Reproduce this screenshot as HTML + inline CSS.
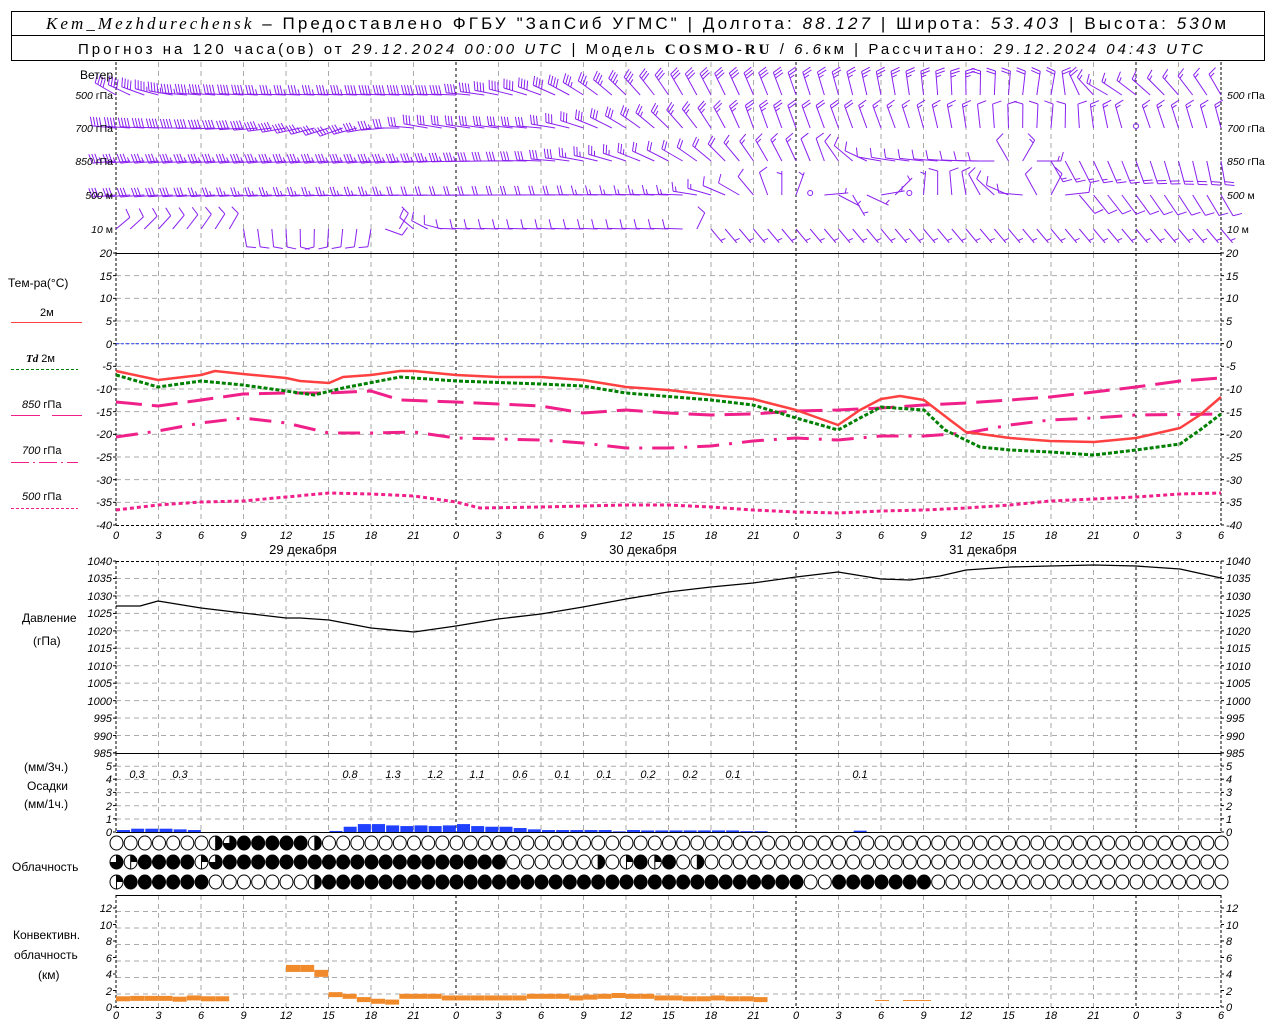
<!DOCTYPE html>
<html><head><meta charset="utf-8">
<style>
html,body{margin:0;padding:0;background:#fff;width:1280px;height:1024px;overflow:hidden}
svg{display:block}
text{font-family:"Liberation Sans",sans-serif;fill:#000}
.t{font-size:11px;font-style:italic}
.l{font-size:12px}
</style></head><body>
<svg id="s" width="1280" height="1024" viewBox="0 0 1280 1024" xmlns="http://www.w3.org/2000/svg">
<rect x="11.5" y="11.5" width="1253" height="49" fill="#fff" stroke="#000"/>
<line x1="11" y1="35.5" x2="1265" y2="35.5" stroke="#000"/>
<text x="46" y="29" font-size="17" textLength="1180" lengthAdjust="spacing"><tspan font-family="Liberation Serif" font-style="italic">Kem_Mezhdurechensk</tspan> – Предоставлено ФГБУ "ЗапСиб УГМС" | Долгота: <tspan font-style="italic">88.127</tspan> | Широта: <tspan font-style="italic">53.403</tspan> | Высота: <tspan font-style="italic">530</tspan>м</text>
<text x="78" y="54" font-size="15" textLength="1125" lengthAdjust="spacing">Прогноз на 120 часа(ов) от <tspan font-style="italic">29.12.2024 00:00 UTC</tspan>  | Модель <tspan font-family="Liberation Serif" font-weight="bold">COSMO-RU</tspan> / <tspan font-style="italic">6.6</tspan>км | Рассчитано: <tspan font-style="italic">29.12.2024 04:43 UTC</tspan></text>
<g id="g"></g>
<g class="l" text-anchor="end" font-size="11">
<text x="113" y="79">Ветер</text>
<text x="113" y="99" font-size="10.5"><tspan font-style="italic">500</tspan> гПа</text>
<text x="113" y="132" font-size="10.5"><tspan font-style="italic">700</tspan> гПа</text>
<text x="113" y="165" font-size="10.5"><tspan font-style="italic">850</tspan> гПа</text>
<text x="113" y="199" font-size="10.5"><tspan font-style="italic">500</tspan> м</text>
<text x="113" y="233" font-size="10.5"><tspan font-style="italic">10</tspan>   м</text>
</g>
<g font-size="10.5">
<text x="1227" y="99"><tspan font-style="italic">500</tspan> гПа</text>
<text x="1227" y="132"><tspan font-style="italic">700</tspan> гПа</text>
<text x="1227" y="165"><tspan font-style="italic">850</tspan> гПа</text>
<text x="1227" y="199"><tspan font-style="italic">500</tspan> м</text>
<text x="1227" y="233"><tspan font-style="italic">10</tspan>   м</text>
</g>
<g font-size="12">
<text x="8" y="287">Тем-ра(°C)</text>
<text x="40" y="316" font-size="11">2м</text>
<text x="26" y="362" font-size="11"><tspan font-style="italic" font-weight="bold" font-family="Liberation Serif">Td</tspan>  2м</text>
<text x="22" y="408" font-size="11"><tspan font-style="italic">850</tspan> гПа</text>
<text x="22" y="454" font-size="11"><tspan font-style="italic">700</tspan> гПа</text>
<text x="22" y="500" font-size="11"><tspan font-style="italic">500</tspan> гПа</text>
<text x="22" y="622">Давление</text>
<text x="33" y="645">(гПа)</text>
<text x="24" y="771">(мм/3ч.)</text>
<text x="27" y="790">Осадки</text>
<text x="24" y="808">(мм/1ч.)</text>
<text x="12" y="871">Облачность</text>
<text x="13" y="939">Конвективн.</text>
<text x="14" y="959">облачность</text>
<text x="38" y="979">(км)</text>
</g>
<line x1="11" y1="322.5" x2="82" y2="322.5" stroke="#ff4040"/>
<line x1="11" y1="369.5" x2="78" y2="369.5" stroke="#008000" stroke-dasharray="3,2"/>
<line x1="11" y1="415.5" x2="40" y2="415.5" stroke="#f0208a"/><line x1="52" y1="415.5" x2="82" y2="415.5" stroke="#f0208a"/>
<line x1="11" y1="462.5" x2="78" y2="462.5" stroke="#f0208a" stroke-dasharray="18,4,2,4"/>
<line x1="11" y1="508.5" x2="78" y2="508.5" stroke="#f0208a" stroke-dasharray="3,2"/>
<g class="t" font-size="13" text-anchor="middle">
<text x="116" y="539">0</text><text x="158.5" y="539">3</text><text x="201" y="539">6</text><text x="243.5" y="539">9</text><text x="286" y="539">12</text><text x="328.5" y="539">15</text><text x="371" y="539">18</text><text x="413.5" y="539">21</text><text x="456" y="539">0</text><text x="498.5" y="539">3</text><text x="541" y="539">6</text><text x="583.5" y="539">9</text><text x="626" y="539">12</text><text x="668.5" y="539">15</text><text x="711" y="539">18</text><text x="753.5" y="539">21</text><text x="796" y="539">0</text><text x="838.5" y="539">3</text><text x="881" y="539">6</text><text x="923.5" y="539">9</text><text x="966" y="539">12</text><text x="1008.5" y="539">15</text><text x="1051" y="539">18</text><text x="1093.5" y="539">21</text><text x="1136" y="539">0</text><text x="1178.5" y="539">3</text><text x="1221" y="539">6</text>
</g>
<g class="t" font-size="13" text-anchor="middle">
<text x="116" y="1019">0</text><text x="158.5" y="1019">3</text><text x="201" y="1019">6</text><text x="243.5" y="1019">9</text><text x="286" y="1019">12</text><text x="328.5" y="1019">15</text><text x="371" y="1019">18</text><text x="413.5" y="1019">21</text><text x="456" y="1019">0</text><text x="498.5" y="1019">3</text><text x="541" y="1019">6</text><text x="583.5" y="1019">9</text><text x="626" y="1019">12</text><text x="668.5" y="1019">15</text><text x="711" y="1019">18</text><text x="753.5" y="1019">21</text><text x="796" y="1019">0</text><text x="838.5" y="1019">3</text><text x="881" y="1019">6</text><text x="923.5" y="1019">9</text><text x="966" y="1019">12</text><text x="1008.5" y="1019">15</text><text x="1051" y="1019">18</text><text x="1093.5" y="1019">21</text><text x="1136" y="1019">0</text><text x="1178.5" y="1019">3</text><text x="1221" y="1019">6</text>
</g>
<g font-size="13" text-anchor="middle">
<text x="303" y="554">29 декабря</text><text x="643" y="554">30 декабря</text><text x="983" y="554">31 декабря</text>
</g>
<g class="t" font-size="10" text-anchor="end">
<text x="112" y="257">20</text><text x="112" y="280">15</text><text x="112" y="302">10</text><text x="112" y="325">5</text><text x="112" y="348">0</text><text x="112" y="370">-5</text><text x="112" y="393">-10</text><text x="112" y="416">-15</text><text x="112" y="438">-20</text><text x="112" y="461">-25</text><text x="112" y="484">-30</text><text x="112" y="506">-35</text><text x="112" y="529">-40</text>
<text x="112" y="565">1040</text><text x="112" y="582">1035</text><text x="112" y="600">1030</text><text x="112" y="617">1025</text><text x="112" y="635">1020</text><text x="112" y="652">1015</text><text x="112" y="670">1010</text><text x="112" y="687">1005</text><text x="112" y="705">1000</text><text x="112" y="722">995</text><text x="112" y="740">990</text><text x="112" y="757">985</text>
<text x="112" y="836">0</text><text x="112" y="823">1</text><text x="112" y="810">2</text><text x="112" y="796">3</text><text x="112" y="783">4</text><text x="112" y="770">5</text>
<text x="112" y="1011">0</text><text x="112" y="995">2</text><text x="112" y="978">4</text><text x="112" y="962">6</text><text x="112" y="945">8</text><text x="112" y="929">10</text><text x="112" y="912">12</text>
</g>
<g class="t" font-size="10">
<text x="1226" y="257">20</text><text x="1226" y="280">15</text><text x="1226" y="302">10</text><text x="1226" y="325">5</text><text x="1226" y="348">0</text><text x="1226" y="370">-5</text><text x="1226" y="393">-10</text><text x="1226" y="416">-15</text><text x="1226" y="438">-20</text><text x="1226" y="461">-25</text><text x="1226" y="484">-30</text><text x="1226" y="506">-35</text><text x="1226" y="529">-40</text>
<text x="1226" y="565">1040</text><text x="1226" y="582">1035</text><text x="1226" y="600">1030</text><text x="1226" y="617">1025</text><text x="1226" y="635">1020</text><text x="1226" y="652">1015</text><text x="1226" y="670">1010</text><text x="1226" y="687">1005</text><text x="1226" y="705">1000</text><text x="1226" y="722">995</text><text x="1226" y="740">990</text><text x="1226" y="757">985</text>
<text x="1226" y="836">0</text><text x="1226" y="823">1</text><text x="1226" y="810">2</text><text x="1226" y="796">3</text><text x="1226" y="783">4</text><text x="1226" y="770">5</text>
<text x="1226" y="1011">0</text><text x="1226" y="995">2</text><text x="1226" y="978">4</text><text x="1226" y="962">6</text><text x="1226" y="945">8</text><text x="1226" y="929">10</text><text x="1226" y="912">12</text>
</g>
<g class="t" font-size="13" text-anchor="middle">
<text x="137" y="778">0.3</text><text x="180" y="778">0.3</text><text x="350" y="778">0.8</text><text x="393" y="778">1.3</text><text x="435" y="778">1.2</text><text x="477" y="778">1.1</text><text x="520" y="778">0.6</text><text x="562" y="778">0.1</text><text x="604" y="778">0.1</text><text x="648" y="778">0.2</text><text x="690" y="778">0.2</text><text x="733" y="778">0.1</text><text x="860" y="778">0.1</text>
</g>
</svg>
<script>
(function(){
var NS="http://www.w3.org/2000/svg",g=document.getElementById("g");
function el(n,a){var e=document.createElementNS(NS,n);for(var k in a)e.setAttribute(k,a[k]);g.appendChild(e);return e;}
var L=116,R=1221;function X(h){return L+h*(R-L)/78;}
var secs=[[62,253,0],[253,525,22.667],[561,753,17.45],[753,832,13.2],[895,1007,16.5]];
secs.forEach(function(s){
 if(s[2]){for(var y=s[0]+s[2];y<s[1]-1;y+=s[2])el("line",{x1:L,x2:R,y1:y,y2:y,stroke:"#aaa","stroke-dasharray":"5,4"});}
 for(var i=1;i<26;i++){var x=L+i*42.5;var day=(i%8==0);
  el("line",{x1:x,x2:x,y1:s[0],y2:s[1],stroke:day?"#000":"#aaa","stroke-dasharray":day?"3,3":"5,4"});}
 el("line",{x1:L,x2:L,y1:s[0],y2:s[1],stroke:"#000","stroke-dasharray":"3,2"});
 el("line",{x1:R,x2:R,y1:s[0],y2:s[1],stroke:"#000","stroke-dasharray":"3,2"});
});
[253.5,525.5,561.5,753.5,832.5,895.5,1007.5].forEach(function(y){el("line",{x1:L,x2:R,y1:y,y2:y,stroke:"#000","stroke-dasharray":(y==561.5||y==525.5||y==1007.5)?"3,2":"none"});});
el("line",{x1:L,x2:R,y1:343.7,y2:343.7,stroke:"#2040ff","stroke-dasharray":"3,2"});
secs.slice(1).forEach(function(s){for(var y=s[1];y>=s[0]-1;y-=s[2]){el("line",{x1:L-3,x2:L,y1:y,y2:y,stroke:"#000"});el("line",{x1:R,x2:R+3,y1:y,y2:y,stroke:"#000"});}});
function poly(pts,c,w,d){var s=pts.map(function(p){return p[0]+","+p[1]}).join(" ");el("polyline",{points:s,fill:"none",stroke:c,"stroke-width":w,"stroke-dasharray":d||"none","stroke-linejoin":"round"});}
var T=[[116,371],[158,380],[201,375],[215,371],[243,374],[286,378],[300,381],[329,383],[343,377],[371,375],[400,371],[414,371],[456,375],[498,377],[541,377],[583,380],[626,387],[668,390],[711,395],[753,399],[796,410],[838,425],[860,410],[881,399],[900,396],[924,400],[950,420],[966,432],[1010,438],[1050,441],[1094,442],[1136,438],[1180,428],[1200,415],[1221,397]];
var TD=[[116,375],[158,387],[201,381],[243,385],[286,391],[314,395],[343,388],[400,377],[456,381],[541,384],[583,386],[626,393],[711,400],[753,405],[796,418],[838,430],[860,418],[881,407],[924,410],[945,430],[980,447],[1010,450],[1050,452],[1094,455],[1136,450],[1180,444],[1200,430],[1221,414]];
var P850=[[116,402],[158,406],[201,400],[243,394],[286,393],[329,393],[371,391],[400,400],[456,402],[498,404],[541,406],[583,413],[626,410],[668,413],[711,415],[753,414],[796,411],[838,410],[881,408],[924,405],[966,403],[1010,400],[1050,397],[1094,392],[1136,387],[1180,381],[1221,378]];
var P700=[[116,437],[158,431],[201,423],[243,418],[286,423],[329,433],[371,433],[414,432],[456,438],[541,440],[583,443],[626,448],[668,448],[711,446],[753,441],[796,438],[838,440],[881,436],[924,436],[966,433],[1010,425],[1050,420],[1094,418],[1136,415],[1221,414]];
var P500=[[116,510],[158,505],[201,502],[243,501],[286,497],[329,493],[371,494],[414,496],[456,502],[480,508],[541,507],[583,506],[626,505],[668,505],[711,507],[753,510],[796,512],[838,513],[881,511],[924,510],[966,508],[1010,505],[1050,501],[1094,499],[1136,497],[1180,494],[1221,493]];
poly(P500,"#f0208a",3,"4,3");
poly(P700,"#f0208a",3,"22,10,3,10");
poly(P850,"#f0208a",3,"26,10");
poly(TD,"#008000",3,"4,2");
poly(T,"#ff4040",2.5);
var PR=[[116,606],[140,606],[158,601],[201,608],[243,613],[286,618],[300,618],[329,620],[371,628],[414,632],[456,626],[498,619],[541,614],[583,607],[626,599],[668,592],[711,587],[753,583],[796,577],[838,572],[881,579],[910,580],[940,576],[966,570],[1010,567],[1050,566],[1094,565],[1136,566],[1180,569],[1221,578]];
poly(PR,"#000",1.3);
var pr={0:.15,1:.25,2:.25,3:.25,4:.2,5:.15,15:.08,16:.4,17:.6,18:.6,19:.5,20:.45,21:.5,22:.45,23:.5,24:.6,25:.45,26:.4,27:.4,28:.3,29:.2,30:.15,31:.15,32:.15,33:.15,34:.15,35:.05,36:.15,37:.12,38:.12,39:.12,40:.12,41:.12,42:.12,43:.12,44:.06,45:.06,52:.1};
for(var h in pr){var x=X(+h);var hh=pr[h]*13.2;el("rect",{x:x+1,y:832-hh,width:13,height:hh,fill:"#2040ff"});}
var cvx=[[0,1.3],[1,1.35],[2,1.35],[3,1.35],[4,1.25],[5,1.4],[6,1.3],[7,1.3],[12,5.1],[13,5.1],[14,4.5],[15,1.8],[16,1.6],[17,1.2],[18,1.0],[19,0.9],[20,1.6],[21,1.6],[22,1.6],[23,1.4],[24,1.4],[25,1.4],[26,1.4],[27,1.4],[28,1.4],[29,1.6],[30,1.6],[31,1.6],[32,1.4],[33,1.5],[34,1.6],[35,1.7],[36,1.6],[37,1.6],[38,1.4],[39,1.4],[40,1.3],[41,1.3],[42,1.4],[43,1.3],[44,1.3],[45,1.2]];
cvx.forEach(function(c){var x=X(c[0]);var y=1007-c[1]*8.25;el("rect",{x:x,y:y,width:14,height:(c[1]>4?7:5),fill:"#f08a2a"});});
el("rect",{x:875,y:1000,width:14,height:1,fill:"#f08a2a"});el("rect",{x:903,y:1000,width:28,height:1,fill:"#f08a2a"});
function row(arr,y){for(var i=0;i<79;i++){var v=arr[i]||0;var cx=X(i)+0.5;
 el("ellipse",{cx:cx,cy:y,rx:6.5,ry:7,fill:v==4?"#000":"#fff",stroke:"#000","stroke-width":1});
 if(v>0&&v<4){var a=v*Math.PI/2;var ex=cx+6.5*Math.sin(a),ey=y-7*Math.cos(a);
  el("path",{d:"M"+cx+","+y+" L"+cx+","+(y-7)+" A6.5,7 0 "+(v>2?1:0)+",1 "+ex+","+ey+" Z",fill:"#000"});
  el("line",{x1:cx,x2:cx,y1:y-7,y2:y+7,stroke:"#000"});}
}}
var r1=[],r2=[],r3=[];
for(var i=0;i<79;i++){r1[i]=0;r2[i]=0;r3[i]=0;}
r1[7]=2;r1[8]=3;for(i=9;i<=13;i++)r1[i]=4;r1[14]=2;
r2[0]=3;r2[1]=1;for(i=2;i<=27;i++)r2[i]=4;r2[6]=1;r2[7]=3;r2[34]=2;r2[36]=1;r2[37]=4;r2[38]=1;r2[39]=4;r2[41]=2;
r3[0]=1;for(i=1;i<=6;i++)r3[i]=4;r3[14]=2;for(i=15;i<=48;i++)r3[i]=4;for(i=51;i<=57;i++)r3[i]=4;
row(r1,843);row(r2,862);row(r3,882);
var C="#8a20f0";
function barb(x,y,ang,sp,L2){var a=ang*Math.PI/180,dx=Math.cos(a),dy=-Math.sin(a);
 var tx=x+dx*L2,ty=y+dy*L2;el("line",{x1:x,y1:y,x2:tx,y2:ty,stroke:C,"stroke-width":1});
 var px=-dy,py=dx; if(py>0||(Math.abs(py)<0.01&&px<0)){px=-px;py=-py;}
 var n=Math.floor(sp/2),half=sp%2,d=0;
 for(var k=0;k<n;k++){var bx=tx-dx*d,by=ty-dy*d;el("line",{x1:bx,y1:by,x2:bx+px*9+dx*2.5,y2:by+py*9+dy*2.5,stroke:C});d+=3;}
 if(half){var bx=tx-dx*(d+(n?0:3)),by=ty-dy*(d+(n?0:3));el("line",{x1:bx,y1:by,x2:bx+px*5+dx*1.5,y2:by+py*5+dy*1.5,stroke:C});}
}
function interp(keys,h){for(var k=1;k<keys.length;k++){if(h<=keys[k][0]){var a=keys[k-1],b=keys[k],t=(h-a[0])/(b[0]-a[0]||1);return [a[1]+(b[1]-a[1])*t,a[2]+(b[2]-a[2])*t];}}var l=keys[keys.length-1];return [l[1],l[2]];}
var lev=[
 [95,24,[[0,150,8],[5,175,9],[12,178,7],[24,178,8],[30,160,8],[40,120,6],[55,100,5],[66,80,4],[70,150,3],[78,120,3]]],
 [128,24,[[0,175,8],[10,185,8],[16,200,7],[22,170,6],[30,175,6],[45,110,5],[55,110,3],[66,85,2],[72,110,3],[78,105,3]]],
 [161,24,[[0,185,7],[20,185,7],[30,178,6],[40,150,4],[46,120,3],[50,110,2],[54,170,2],[62,180,2],[66,-60,3],[78,-80,4]]],
 [195,24,[[0,185,6],[40,178,3],[44,150,2],[48,70,1],[52,-60,1],[56,80,1],[60,100,2],[64,175,2],[68,-50,2],[78,-60,2]]],
 [229,18,[[0,40,2],[8,60,2],[9,-80,2],[18,-100,2],[21,140,2],[24,178,2],[40,178,2],[42,-50,1],[78,-50,1]]]];
lev.forEach(function(lv){for(var h=0;h<=78;h++){var v=interp(lv[2],h);var x=X(h),y=lv[0];
 if((lv[0]==128&&h==72)||(lv[0]==195&&(h==49||h==56))){el("circle",{cx:x,cy:y-2,r:2.5,fill:"none",stroke:C});continue;}
 barb(x,y,v[0],Math.round(v[1]),lv[1]);}});
})();
</script>
</body></html>
